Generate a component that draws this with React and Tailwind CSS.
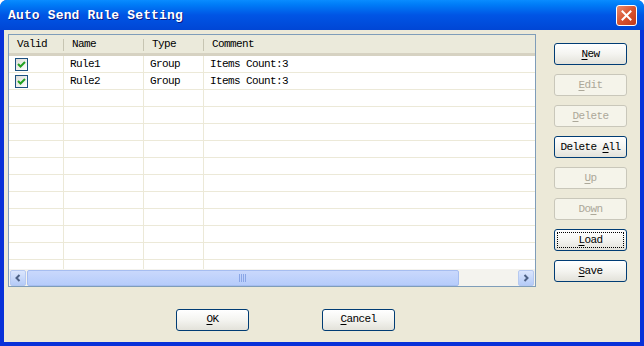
import React from "react";

const mono = "font-['Liberation_Mono',monospace]";

const columns = [
  { label: "Valid", w: "w-[55px]" },
  { label: "Name", w: "w-[80px]" },
  { label: "Type", w: "w-[60px]" },
  { label: "Comment", w: "flex-1" },
];

const rules = [
  { name: "Rule1", type: "Group", comment: "Items Count:3" },
  { name: "Rule2", type: "Group", comment: "Items Count:3" },
];

const sideButtons = [
  { pre: "", key: "N", post: "ew" },
  { pre: "", key: "E", post: "dit", disabled: true },
  { pre: "", key: "D", post: "elete", disabled: true },
  { pre: "Delete ", key: "A", post: "ll" },
  { pre: "", key: "U", post: "p", disabled: true },
  { pre: "Do", key: "w", post: "n", disabled: true },
  { pre: "", key: "L", post: "oad", focused: true },
  { pre: "", key: "S", post: "ave" },
];

function XpButton({ pre, k, post, disabled, focused, className = "" }) {
  return (
    <button
      className={`relative h-[22px] w-[73px] rounded-[3px] border ${
        disabled
          ? "border-[#c9c7ba] bg-[#f5f4ea] text-[#aca899]"
          : "border-[#003c74] bg-gradient-to-b from-white via-[#f4f4f0] to-[#e3e2da] text-black"
      } ${mono} text-[11px] tracking-[-0.6px] leading-none ${className}`}
    >
      {focused && (
        <span className="absolute inset-[2px] border border-dotted border-black rounded-[1px]" />
      )}
      {pre}
      <span className="underline underline-offset-2">{k}</span>
      {post}
    </button>
  );
}

function Check() {
  return (
    <div className="w-[13px] h-[13px] border border-[#1c5180] bg-gradient-to-br from-[#dcdcd7] to-white flex items-center justify-center">
      <svg width="9" height="9" viewBox="0 0 9 9">
        <path d="M1 4 L3.5 6.5 L8 2" stroke="#21a121" strokeWidth="2" fill="none" />
      </svg>
    </div>
  );
}

function Cell({ w, children, last }) {
  return (
    <div className={`${w} h-full flex items-center pl-[6px] ${last ? "" : "border-r border-[#ece9d8]"}`}>
      {children}
    </div>
  );
}

function ListView() {
  const emptyRows = Array.from({ length: 11 });
  return (
    <div className="w-[528px] h-[253px] border border-[#7f9db9] bg-white flex flex-col">
      <div className="h-[21px] shrink-0 flex bg-[#ebeadb] border-b-[3px] border-[#d6d2c2]">
        {columns.map((c, i) => (
          <div key={c.label} className={`${c.w} h-full flex items-center pl-[8px] relative ${mono} text-[11px] tracking-[-0.6px]`}>
            {c.label}
            {i < 3 && <span className="absolute right-0 top-[4px] h-[12px] w-[1px] bg-[#c7c5b2]" />}
          </div>
        ))}
      </div>
      <div className="flex-1 overflow-hidden">
        {rules.map((r) => (
          <div key={r.name} className={`h-[17px] flex border-b border-[#ece9d8] ${mono} text-[11px] tracking-[-0.6px]`}>
            <Cell w="w-[55px]"><Check /></Cell>
            <Cell w="w-[80px]">{r.name}</Cell>
            <Cell w="w-[60px]">{r.type}</Cell>
            <Cell w="flex-1" last>{r.comment}</Cell>
          </div>
        ))}
        {emptyRows.map((_, i) => (
          <div key={i} className="h-[17px] flex border-b border-[#ece9d8]">
            <Cell w="w-[55px]" />
            <Cell w="w-[80px]" />
            <Cell w="w-[60px]" />
            <Cell w="flex-1" last />
          </div>
        ))}
      </div>
      <div className="h-[17px] shrink-0 flex items-center bg-[#f4f3ee] px-[1px]">
        <div className="w-[16px] h-[16px] rounded-[2px] border border-[#b6c9f0] bg-gradient-to-b from-[#dbe6fd] to-[#b5cbf7] flex items-center justify-center">
          <svg width="8" height="8" viewBox="0 0 8 8">
            <path d="M5.5 1 L2.5 4 L5.5 7" stroke="#4d6185" strokeWidth="2" fill="none" />
          </svg>
        </div>
        <div className="ml-[1px] w-[432px] h-[16px] rounded-[2px] border border-[#a6bdf0] bg-gradient-to-b from-[#c9d8fc] to-[#b6ccfb] flex items-center justify-center">
          <svg width="8" height="8" viewBox="0 0 8 8">
            <path d="M0.5 0 V8 M2.5 0 V8 M4.5 0 V8 M6.5 0 V8" stroke="#8aa6e6" strokeWidth="1" />
          </svg>
        </div>
        <div className="flex-1" />
        <div className="w-[16px] h-[16px] rounded-[2px] border border-[#b6c9f0] bg-gradient-to-b from-[#dbe6fd] to-[#b5cbf7] flex items-center justify-center">
          <svg width="8" height="8" viewBox="0 0 8 8">
            <path d="M2.5 1 L5.5 4 L2.5 7" stroke="#4d6185" strokeWidth="2" fill="none" />
          </svg>
        </div>
      </div>
    </div>
  );
}

export default function App() {
  return (
    <div className="w-[644px] h-[346px] bg-[#0831d9] rounded-t-[7px] flex flex-col overflow-hidden">
      <div className="h-[30px] flex items-center justify-between pl-[8px] pr-[7px] bg-gradient-to-b from-[#0a8cff] via-[#0055e5] to-[#0046d5]">
        <span className={`${mono} text-[13px] font-bold tracking-[0.15px] pt-[2px] text-white [text-shadow:1px_1px_#0a1883]`}>
          Auto Send Rule Setting
        </span>
        <div className="w-[21px] h-[21px] rounded-[3px] border border-white bg-gradient-to-br from-[#e98a6c] via-[#d8532f] to-[#c1391a] flex items-center justify-center">
          <svg width="11" height="11" viewBox="0 0 11 11">
            <path d="M1.5 1.5 L9.5 9.5 M9.5 1.5 L1.5 9.5" stroke="white" strokeWidth="2" strokeLinecap="square" />
          </svg>
        </div>
      </div>
      <div className="flex-1 mx-[4px] mb-[4px] bg-[#ece9d8] flex flex-col">
        <div className="flex pt-[4px] pl-[4px]">
          <ListView />
          <div className="ml-[18px] pt-[9px] flex flex-col gap-[9px]">
            {sideButtons.map((b) => (
              <XpButton key={b.pre + b.key} pre={b.pre} k={b.key} post={b.post} disabled={b.disabled} focused={b.focused} />
            ))}
          </div>
        </div>
        <div className="flex-1 flex items-center pl-[172px] gap-[73px] pt-[10px]">
          <XpButton pre="" k="O" post="K" />
          <XpButton pre="" k="C" post="ancel" />
        </div>
      </div>
    </div>
  );
}
